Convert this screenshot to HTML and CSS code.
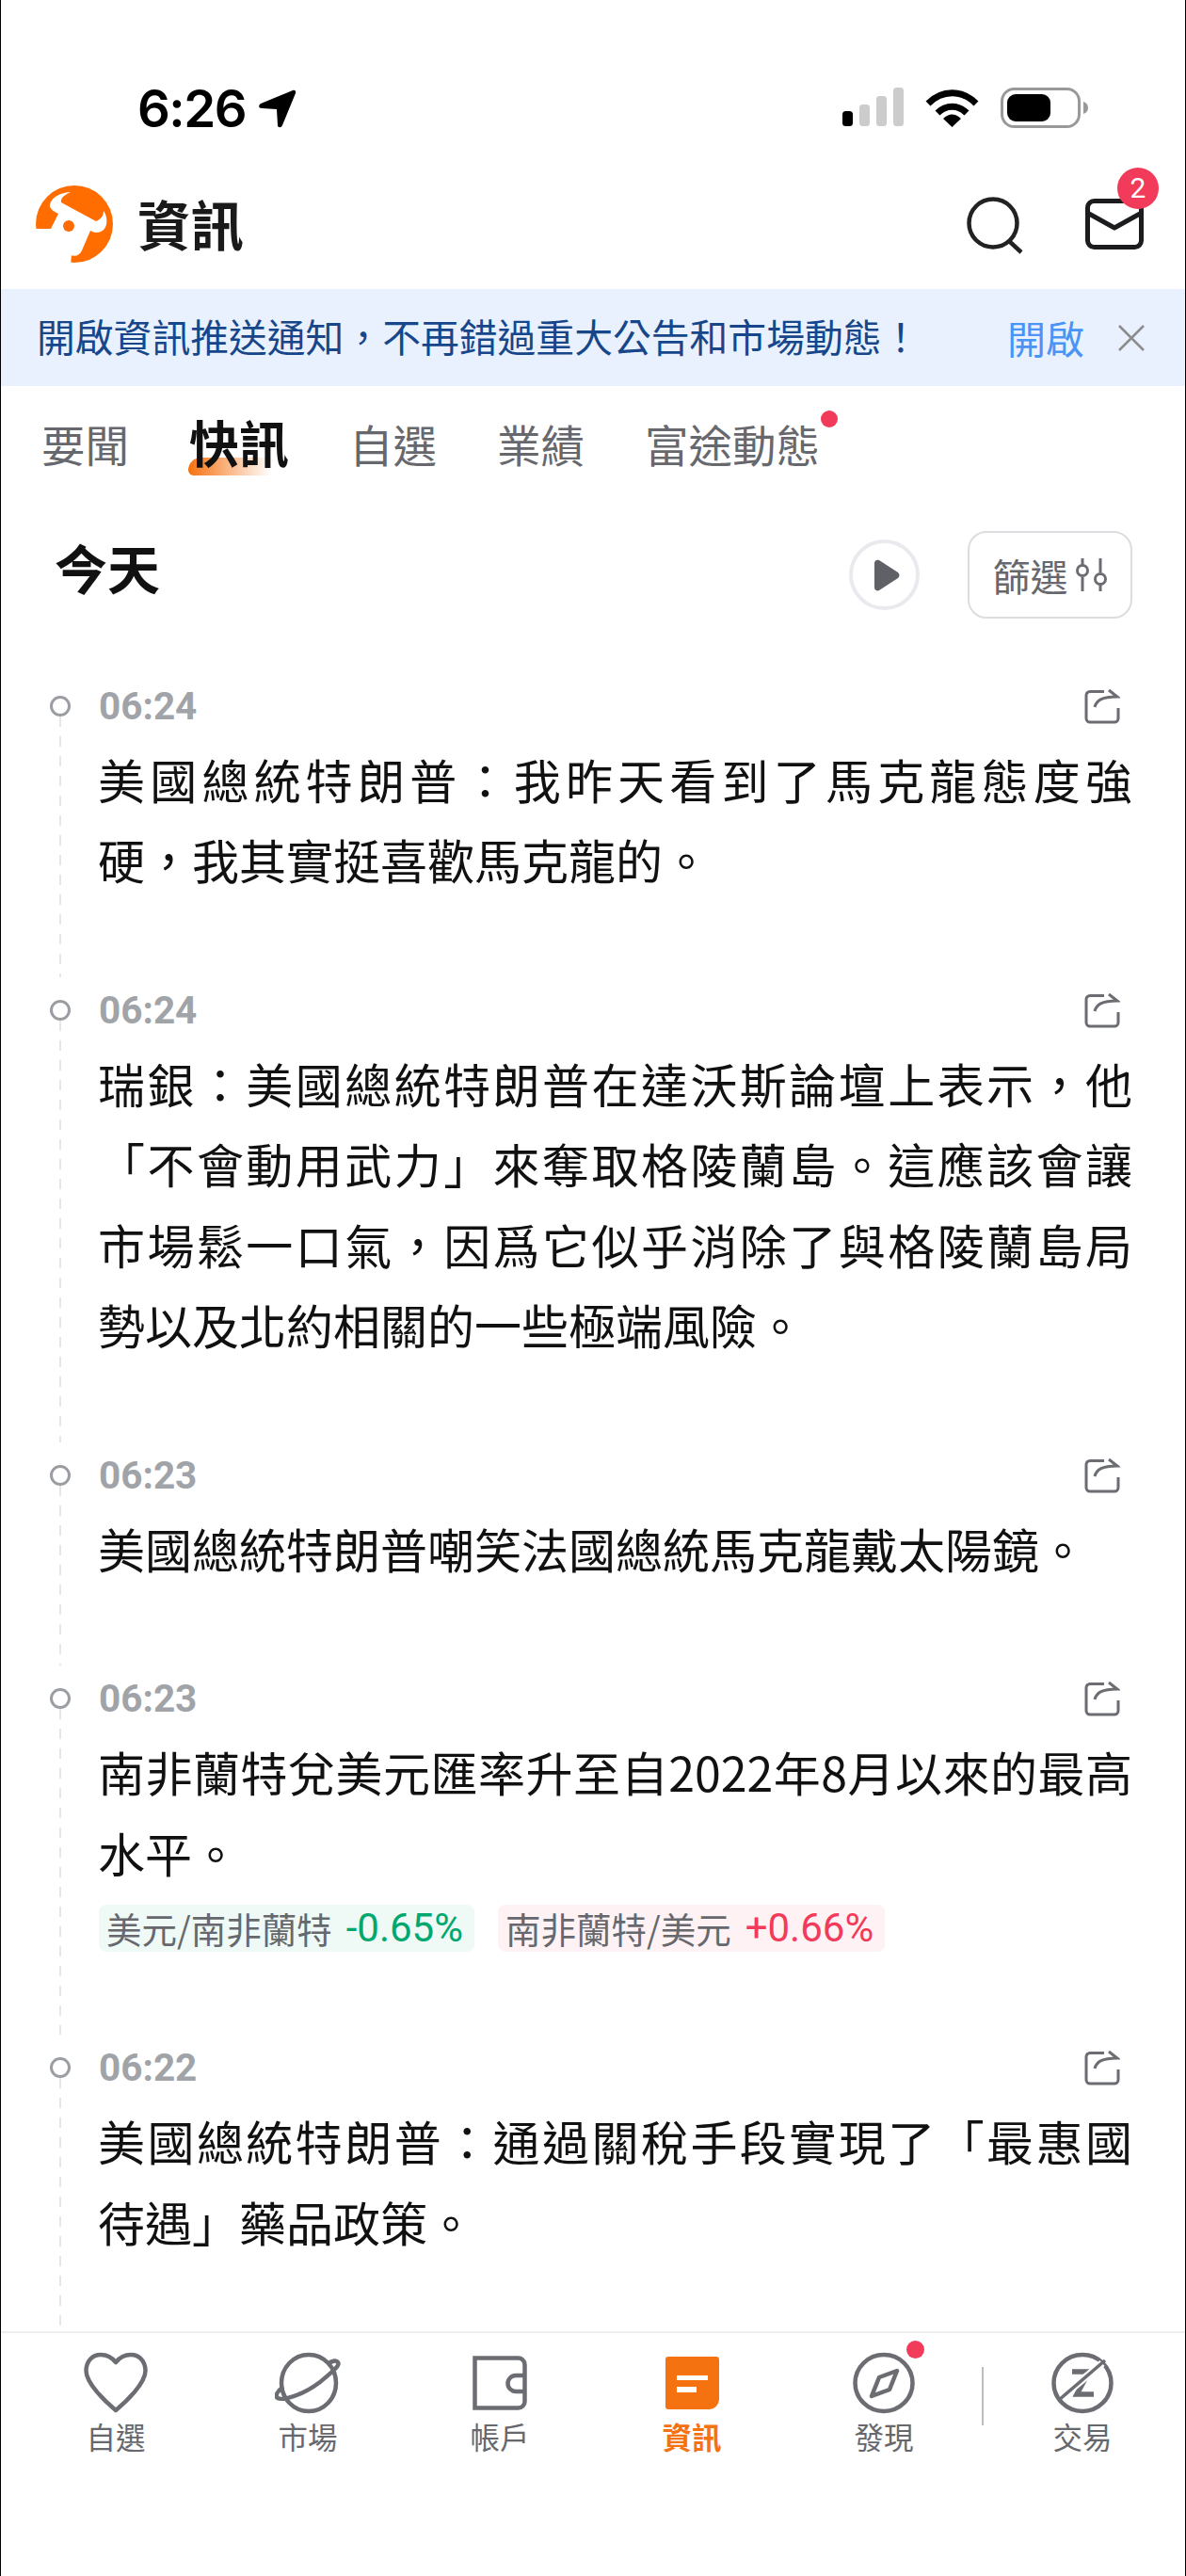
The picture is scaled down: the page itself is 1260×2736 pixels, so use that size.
FILE: index.html
```html
<!DOCTYPE html>
<html lang="zh-Hant">
<head>
<meta charset="utf-8">
<title>資訊</title>
<link rel="stylesheet" href="styles.css">
</head>
<body>
<div class="phone">
  <div class="status">
    <span class="clock">6:26</span>
    <svg class="loc" width="41" height="42" viewBox="0 0 41 42"><path d="M37 1 3 15C0 17 1 20 4 20L20 21 21 38C21 41 25 41 26 38L40 4C41 2 39 0 37 1Z"/></svg>
    <div class="status-right">
      <svg width="65" height="41" viewBox="0 0 65 41"><rect y="25" width="11" height="16" rx="3.5"/><rect class="off" x="18" y="18" width="11" height="23" rx="3.5"/><rect class="off" x="36" y="9" width="11" height="32" rx="3.5"/><rect class="off" x="54" width="11" height="41" rx="3.5"/></svg>
      <svg width="57" height="42" viewBox="0 0 57 42"><path class="wifi" d="M3 17C18 2 39 2 54 17"/><path class="wifi" d="M13 27C22 18 35 18 44 27"/><path d="M19 33C25 27 32 27 38 33L28.500 42Z"/></svg>
      <svg width="93" height="43" viewBox="0 0 93 43"><rect x="1.500" y="1.500" width="82" height="40" rx="13" fill="none" stroke="#999" stroke-width="3"/><rect x="7" y="7" width="46" height="29" rx="9"/><path fill="#999" d="M88 15C91 16 93 18 93 21.500 93 25 91 27 88 28Z"/></svg>
    </div>
  </div>

  <header class="header">
    <svg class="logo" width="82" height="82" viewBox="0 0 82 82"><circle cx="41" cy="41" r="41" fill="#ff6d00"/><path fill="#fff" d="M-2 46H16L24 30C18 27 14 24 15 20 17 12 28 7 37 7 31 10 26 13 27 18L64 38C69 36 72 32 72 27 77 33 78 50 64 50 62 50 60 49 58 48L49 69C46 76 38 77 32 70L38 74 37 84H-2Z"/><circle cx="35" cy="43" r="6" fill="#ff6d00"/></svg>
    <h1 class="title">資訊</h1>
    <div class="actions">
      <svg width="64" height="64" viewBox="0 0 64 64" fill="none" stroke="#222" stroke-width="4.500"><circle cx="31" cy="31" r="25.500"/><path d="M47 49 61 62" /></svg>
      <div class="mail">
        <svg width="62" height="54" viewBox="0 0 62 54" fill="none" stroke="#1c1c1e" stroke-width="5"><rect x="2.500" y="2.500" width="57" height="49" rx="7"/><path d="M4 16 31 31 58 16" stroke-linejoin="round"/></svg>
        <span class="badge">2</span>
      </div>
    </div>
  </header>

  <div class="banner">
    <span class="banner-text">開啟資訊推送通知，不再錯過重大公告和市場動態！</span>
    <span class="banner-open">開啟</span>
    <svg width="28" height="28" viewBox="0 0 28 28" stroke="#8c8c8c" stroke-width="2.500"><path d="M1 1 27 27M27 1 1 27"/></svg>
  </div>

  <nav class="tabs">
    <span class="tab">要聞</span>
    <span class="tab active">快訊</span>
    <span class="tab">自選</span>
    <span class="tab">業績</span>
    <span class="tab dotted">富途動態</span>
  </nav>

  <div class="day-row">
    <h2 class="day">今天</h2>
    <span class="play"><svg width="28" height="34" viewBox="0 0 28 34"><path fill="#5f6166" d="M1 4C1 1 4 0 6 1L26 14C28 16 28 18 26 20L6 33C4 34 1 33 1 30Z"/></svg></span>
    <span class="filter">篩選
      <svg width="34" height="36" viewBox="0 0 34 36" fill="none" stroke="#6b6d72" stroke-width="3"><path d="M7 0V7M7 20V35M26 0V15M26 28V35"/><circle cx="7" cy="13" r="5.500"/><circle cx="26" cy="22" r="5.500"/></svg>
    </span>
  </div>

  <main class="feed">
    <article class="item">
      <div class="marker"><span class="dot"></span><span class="line"></span></div>
      <div class="body">
        <div class="meta"><time class="time">06:24</time><svg class="share" width="38" height="38" viewBox="0 0 38 38" fill="none" stroke="#6b6d72" stroke-width="3"><path d="M21 3.500H6A4 4 0 0 0 2 7.500V32A4 4 0 0 0 6 36H32A4 4 0 0 0 36 32V21"/><path d="M11 20C13 13 18 9 35 9L26 2"/></svg></div>
        <p class="text">美國總統特朗普：我昨天看到了馬克龍態度強硬，我其實挺喜歡馬克龍的。</p>
      </div>
    </article>
    <article class="item">
      <div class="marker"><span class="dot"></span><span class="line"></span></div>
      <div class="body">
        <div class="meta"><time class="time">06:24</time><svg class="share" width="38" height="38" viewBox="0 0 38 38" fill="none" stroke="#6b6d72" stroke-width="3"><path d="M21 3.500H6A4 4 0 0 0 2 7.500V32A4 4 0 0 0 6 36H32A4 4 0 0 0 36 32V21"/><path d="M11 20C13 13 18 9 35 9L26 2"/></svg></div>
        <p class="text">瑞銀：美國總統特朗普在達沃斯論壇上表示，他「不會動用武力」來奪取格陵蘭島。這應該會讓市場鬆一口氣，因爲它似乎消除了與格陵蘭島局勢以及北約相關的一些極端風險。</p>
      </div>
    </article>
    <article class="item">
      <div class="marker"><span class="dot"></span><span class="line"></span></div>
      <div class="body">
        <div class="meta"><time class="time">06:23</time><svg class="share" width="38" height="38" viewBox="0 0 38 38" fill="none" stroke="#6b6d72" stroke-width="3"><path d="M21 3.500H6A4 4 0 0 0 2 7.500V32A4 4 0 0 0 6 36H32A4 4 0 0 0 36 32V21"/><path d="M11 20C13 13 18 9 35 9L26 2"/></svg></div>
        <p class="text">美國總統特朗普嘲笑法國總統馬克龍戴太陽鏡。</p>
      </div>
    </article>
    <article class="item">
      <div class="marker"><span class="dot"></span><span class="line"></span></div>
      <div class="body">
        <div class="meta"><time class="time">06:23</time><svg class="share" width="38" height="38" viewBox="0 0 38 38" fill="none" stroke="#6b6d72" stroke-width="3"><path d="M21 3.500H6A4 4 0 0 0 2 7.500V32A4 4 0 0 0 6 36H32A4 4 0 0 0 36 32V21"/><path d="M11 20C13 13 18 9 35 9L26 2"/></svg></div>
        <p class="text">南非蘭特兌美元匯率升至自2022年8月以來的最高水平。</p>
        <div class="chips">
          <span class="chip down">美元/南非蘭特<b>-0.65%</b></span>
          <span class="chip up">南非蘭特/美元<b>+0.66%</b></span>
        </div>
      </div>
    </article>
    <article class="item">
      <div class="marker"><span class="dot"></span><span class="line"></span></div>
      <div class="body">
        <div class="meta"><time class="time">06:22</time><svg class="share" width="38" height="38" viewBox="0 0 38 38" fill="none" stroke="#6b6d72" stroke-width="3"><path d="M21 3.500H6A4 4 0 0 0 2 7.500V32A4 4 0 0 0 6 36H32A4 4 0 0 0 36 32V21"/><path d="M11 20C13 13 18 9 35 9L26 2"/></svg></div>
        <p class="text">美國總統特朗普：通過關稅手段實現了「最惠國待遇」藥品政策。</p>
      </div>
    </article>
  </main>

  <footer class="nav">
    <div class="nav-item">
      <svg width="68" height="66" viewBox="0 0 68 66" fill="none" stroke="#6b6d72" stroke-width="4.500" stroke-linejoin="round"><path d="M34 11C30 6 25 3 18 3 9 3 2.500 10 2.500 20 2.500 33 22 52 34 62 46 52 65.500 33 65.500 20 65.500 10 59 3 50 3 43 3 38 6 34 11Z"/></svg>
      <span class="nav-label">自選</span>
    </div>
    <div class="nav-item">
      <svg width="70" height="66" viewBox="0 0 70 66" fill="none" stroke="#6b6d72" stroke-width="4.500"><ellipse cx="36" cy="33" rx="29" ry="30"/><path d="M9 37C2 42 0 47 3 49 8 52 30 46 48 32 60 22 70 14 67 11 65 8 60 10 56 13"/></svg>
      <span class="nav-label">市場</span>
    </div>
    <div class="nav-item">
      <svg width="58" height="66" viewBox="0 0 58 66" fill="none" stroke="#6b6d72" stroke-width="4.500"><path d="M2.500 6.500H48A7 7 0 0 1 55.500 13.500V52A7 7 0 0 1 48 59.500H2.500Z"/><path d="M55.500 25H46A8.500 8.500 0 0 0 46 42H55.500"/></svg>
      <span class="nav-label">帳戶</span>
    </div>
    <div class="nav-item current">
      <svg width="57" height="66" viewBox="0 0 57 66"><path fill="#f57210" d="M3 5H54A3 3 0 0 1 57 8V50A11 11 0 0 1 46 61H3A3 3 0 0 1 0 58V8A3 3 0 0 1 3 5Z"/><path fill="#fff" d="M12 25H45V30H12ZM12 37H33V43H12Z"/></svg>
      <span class="nav-label">資訊</span>
    </div>
    <div class="nav-item">
      <svg width="66" height="66" viewBox="0 0 66 66" fill="none" stroke="#6b6d72" stroke-width="4.500" stroke-linejoin="round"><ellipse cx="33" cy="33" rx="30.500" ry="30"/><path d="M47 20 39 40 20 47 28 27Z"/></svg>
      <span class="nav-label">發現</span>
      <span class="nav-dot"></span>
    </div>
    <span class="nav-sep"></span>
    <div class="nav-item">
      <svg width="66" height="66" viewBox="0 0 66 66" fill="none" stroke="#6b6d72"><ellipse cx="33" cy="33" rx="30.500" ry="30" stroke-width="4.500"/><path stroke-width="5.500" d="M22 21H40L27 45H45"/><path stroke="#fff" stroke-width="8" d="M12 47 54 12"/><path stroke-width="3.500" d="M8 51 57 9"/></svg>
      <span class="nav-label">交易</span>
    </div>
  </footer>
</div>
</body>
</html>
```
FILE: styles.css
```css
* { box-sizing: border-box; }
html, body { margin: 0; padding: 0; background: #fff; }
body { font-family: "Noto Sans CJK TC", "Noto Sans", sans-serif; color: #111; }
h1, h2, p { margin: 0; }

.phone {
  width: 1260px;
  height: 2736px;
  display: flex;
  flex-direction: column;
  overflow: hidden;
  border-left: 1px solid #000;
  border-right: 1px solid #000;
}

.status {
  height: 175px;
  flex: none;
  display: flex;
  align-items: flex-start;
  padding: 84px 103px 0 145px;
}
.clock { font: 600 54.500px/62px Inter, sans-serif; letter-spacing: -1.5px; color: #000; }
.loc { margin: 11px 0 0 13px; }
.status-right { margin-left: auto; display: flex; gap: 23px; padding-top: 9px; }
.status-right .off { fill: #ccc; }
.wifi { fill: none; stroke: #000; stroke-width: 7; }

.header {
  height: 132px;
  flex: none;
  display: flex;
  align-items: flex-start;
  padding: 22px 44px 0 37px;
}
.title { font-size: 56.500px; line-height: 82px; font-weight: 700; color: #1a1a1a; margin-left: 26px; margin-top: -2px; }
.actions { margin-left: auto; display: flex; gap: 65px; padding-top: 9px; }
.mail { position: relative; margin-top: 5px; height: 54px; }
.badge {
  position: absolute;
  left: 34px;
  top: -33px;
  width: 44px;
  height: 44px;
  border-radius: 50%;
  background: #f23a5a;
  color: #fff;
  font: 400 30px/44px Roboto, sans-serif;
  text-align: center;
}

.banner {
  height: 103px;
  flex: none;
  display: flex;
  align-items: center;
  padding: 0 43px 0 38px;
  background: #e8f1fd;
}
.banner-text { font-size: 40.800px; color: #17468a; margin-top: -5px; }
.banner-open { font-size: 41px; color: #4a94f5; margin-left: auto; margin-right: 36px; margin-top: -2px; }

.tabs {
  height: 154px;
  flex: none;
  display: flex;
  gap: 64px;
  align-items: flex-start;
  padding: 28px 0 0 43px;
}
.tab { font-size: 46.500px; line-height: 66px; color: #66686d; position: relative; }
.tab.active { font-size: 53px; font-weight: 700; color: #111; line-height: 66px; margin-top: -2px; isolation: isolate; }
.tab.active::after {
  content: "";
  position: absolute;
  left: -1px;
  top: 50px;
  width: 88px;
  height: 19px;
  border-radius: 14px 0 0 6px;
  background: linear-gradient(90deg, #f57210, rgba(245, 114, 16, 0));
  z-index: -1;
}
.tab.dotted::after {
  content: "";
  position: absolute;
  right: -19px;
  top: -2px;
  width: 18px;
  height: 18px;
  border-radius: 50%;
  background: #f23a5a;
}

.day-row {
  height: 93px;
  flex: none;
  display: flex;
  align-items: center;
  padding: 0 56px 0 57px;
}
.day { font-size: 56px; font-weight: 700; line-height: 80px; margin-top: -18px; }
.play {
  margin-left: auto;
  width: 75px;
  height: 75px;
  border: 4px solid #e9eaee;
  border-radius: 50%;
  display: flex;
  align-items: center;
  justify-content: center;
  padding-left: 5px;
}
.filter {
  width: 175px;
  height: 93px;
  margin-left: 51px;
  border: 2px solid #dcdde0;
  border-radius: 20px;
  display: flex;
  align-items: center;
  justify-content: center;
  gap: 8px;
  font-size: 40px;
  color: #66686d;
}

.feed { flex: 1; min-height: 0; overflow: hidden; padding: 57.500px 56px 0 51px; }
.item { display: flex; gap: 30px; }
.marker { width: 23px; flex: none; display: flex; flex-direction: column; align-items: center; padding-top: 24px; }
.dot { width: 22px; height: 22px; border: 3px solid #9a9da2; border-radius: 50%; flex: none; }
.line {
  flex: 1;
  width: 2px;
  background: repeating-linear-gradient(180deg, #e6e6e6 0 11px, transparent 11px 21px);
}
.body { flex: 1; min-width: 0; padding-bottom: 82px; }
.meta { height: 70px; display: flex; align-items: center; justify-content: space-between; padding-right: 13px; }
.time { font: 700 40.500px/70px Roboto, sans-serif; color: #a0a3a8; }
.text { font-size: 50px; line-height: 85.500px; text-align: justify; color: #111; margin-left: -1px; }

.chips { display: flex; gap: 25px; height: 50px; margin-top: 12.500px; margin-bottom: 6.500px; }
.chip { display: flex; align-items: center; padding: 0 12px 0 8px; border-radius: 8px; font-size: 37.500px; color: #66686d; }
.chip b { font: 400 42px/50px Roboto, sans-serif; margin-left: 15px; }
.chip.down { background: #eff9f5; }
.chip.down b { color: #00a870; }
.chip.up { background: #fef2f4; }
.chip.up b { color: #f23a5a; }

.nav {
  height: 260px;
  flex: none;
  display: flex;
  align-items: flex-start;
  padding: 20px 0 0 20px;
  border-top: 2px solid #eee;
  background: #fff;
}
.nav-item {
  position: relative;
  width: 204px;
  flex: none;
  display: flex;
  flex-direction: column;
  align-items: center;
  gap: 5px;
}
.nav-label { font-size: 31.500px; line-height: 36px; color: #66686d; }
.current .nav-label { color: #f57210; font-weight: 700; }
.nav-sep { width: 2px; height: 62px; background: #bdbdbd; margin-top: 16px; margin-left: 2px; flex: none; }
.nav-sep + .nav-item { width: 210px; }
.nav-dot {
  position: absolute;
  left: 126px;
  top: -12px;
  width: 19px;
  height: 19px;
  border-radius: 50%;
  background: #f23a5a;
}
```
